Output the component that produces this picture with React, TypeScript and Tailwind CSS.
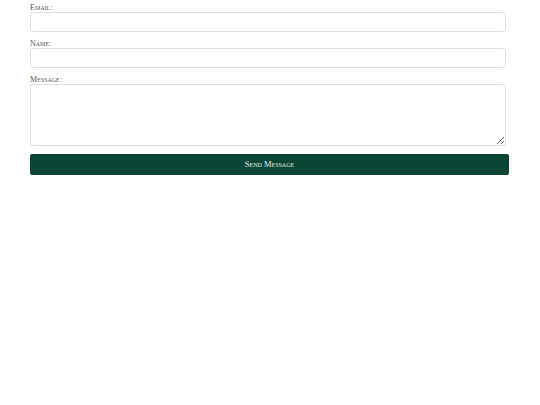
export default function App() {
  const label =
    "block h-[8px] text-[8px] leading-[8px] text-[#555] [font-variant:small-caps]";
  const field =
    "block w-[476px] rounded-[3px] border border-[#e0e0e0] bg-white outline-none";
  return (
    <div
      className="min-h-[405px] w-[540px] bg-white pl-[30px] pt-[4px]"
      style={{ fontFamily: '"Liberation Serif", serif' }}
    >
      <form className="flex flex-col" onSubmit={(e) => e.preventDefault()}>
        <label className={label}>Email:</label>
        <input type="email" className={`${field} mb-[8px] h-[20px]`} />
        <label className={label}>Name:</label>
        <input type="text" className={`${field} mb-[8px] h-[20px]`} />
        <label className={label}>Message:</label>
        <textarea className={`${field} mb-[8px] h-[62px] resize-y`} />
        <button
          type="submit"
          className="h-[21px] w-[479px] rounded-[2px] bg-[#0a4535] text-[8.5px] leading-[21px] text-[#e6eeea] [font-variant:small-caps]"
        >
          Send Message
        </button>
      </form>
    </div>
  );
}
